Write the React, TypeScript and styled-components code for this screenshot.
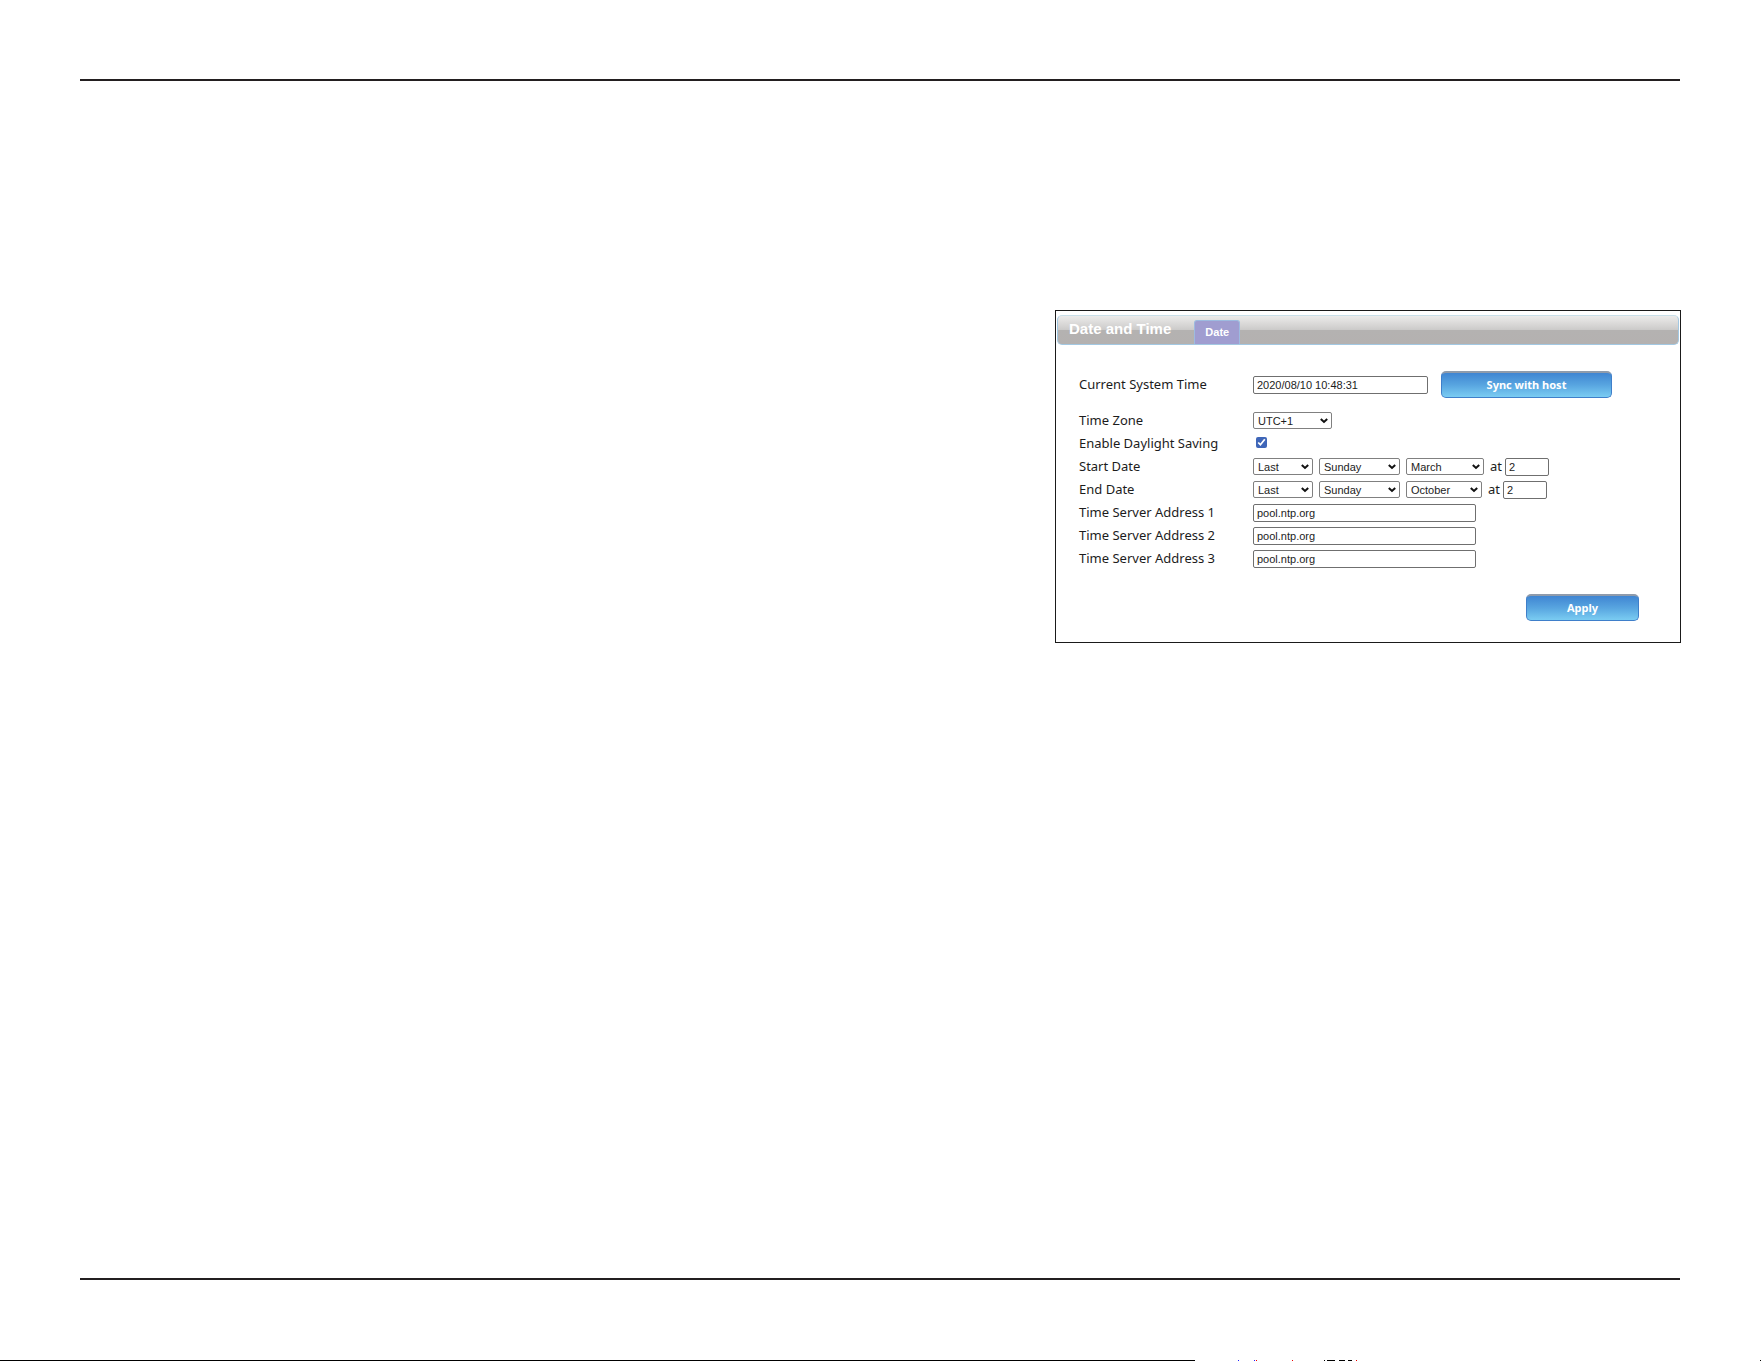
import React from "react";
import styled, { createGlobalStyle } from "styled-components";

const GlobalStyle = createGlobalStyle`
  *, *::before, *::after { box-sizing: border-box; }
  body { margin: 0; background: #fff; color: #1c1c1c; font-family: "Noto Sans", "Open Sans", sans-serif; }
`;

const Page = styled.div`
  min-height: 100vh;
  display: flex;
  flex-direction: column;
  padding-top: 79px;
`;

const Rule = styled.hr`
  flex: none;
  height: 2px;
  margin: 0 81px 0 80px;
  border: 0;
  background: #231f20;
`;

const Main = styled.main`
  flex: 1;
  display: flex;
  justify-content: flex-end;
  align-items: flex-start;
  padding: 229px 80px 40px;
`;

const PageFoot = styled.footer`
  display: flex;
  padding-top: 80px;
`;

const FootLine = styled.div`
  flex: 1;
  height: 1px;
  background: #000;
`;

const FootMarks = styled.svg`
  display: block;
  flex: none;
`;

const Panel = styled.section`
  width: 626px;
  max-width: 100%;
  border: 1px solid #1a1a1a;
  background: #fff;
`;

const TitleBar = styled.header`
  display: flex;
  align-items: flex-end;
  gap: 23px;
  height: 30px;
  margin: 4px 1px 0;
  padding-left: 11px;
  border: 1px solid #a3c8e2;
  border-top-color: #c9dfe9;
  border-radius: 5px;
  background: linear-gradient(#ecebea 0, #cbcac9 50%, #b4b2b1 51%, #b4b1b0 100%);
`;

const Title = styled.h1`
  margin: 0;
  padding-bottom: 6px;
  font: bold 15px/18px "Liberation Sans", Arial, sans-serif;
  color: #fff;
`;

const Tab = styled.a`
  width: 46px;
  height: 24px;
  border: 1px solid #9dbbe0;
  border-bottom: 0;
  border-radius: 3px 3px 0 0;
  background: #a09dd0;
  color: #fff;
  font: bold 11px/23px "Liberation Sans", Arial, sans-serif;
  text-align: center;
  text-decoration: none;
`;

const Form = styled.form`
  display: flex;
  flex-direction: column;
  padding: 26px 41px 21px 23px;
`;

const Row = styled.div<{ $gap?: number }>`
  display: grid;
  grid-template-columns: 174px 1fr;
  align-items: center;
  min-height: 23px;
  margin-bottom: ${(p) => p.$gap ?? 0}px;
`;

const labelFont = `
  padding-bottom: 2px;
  font-size: 13px;
  line-height: 18px;
  color: #1c1c1c;
`;

const Label = styled.label`
  ${labelFont}
`;

const AtLabel = styled.label`
  ${labelFont}
`;

const Controls = styled.div<{ $gap?: number }>`
  display: flex;
  align-items: center;
  gap: ${(p) => p.$gap ?? 6}px;
`;

const At = styled.span`
  display: flex;
  align-items: center;
  gap: 3px;
`;

const TextBox = styled.input<{ $w: number }>`
  width: ${(p) => p.$w}px;
  height: 18px;
  padding: 0 3px;
  border: 1px solid #6f6f6f;
  border-radius: 2px;
  background: #fff;
  color: #1c1c1c;
  font: 11px/16px "Liberation Sans", Arial, sans-serif;
`;

const SelectWrap = styled.span<{ $w: number }>`
  position: relative;
  display: flex;
  width: ${(p) => p.$w}px;
`;

const SelectBox = styled.select`
  appearance: none;
  width: 100%;
  height: 17px;
  padding: 1px 16px 0 4px;
  border: 1px solid #808080;
  border-radius: 2px;
  background: #fff;
  color: #1c1c1c;
  font: 11px/14px "Liberation Sans", Arial, sans-serif;
`;

const Chevron = styled.svg`
  position: absolute;
  right: 4px;
  top: 6px;
  pointer-events: none;
`;

const Tick = styled.input`
  width: 11px;
  height: 11px;
  margin: 0 3px 2px;
  accent-color: #3f66b8;
`;

const BlueButton = styled.button<{ $w: number }>`
  width: ${(p) => p.$w}px;
  height: 27px;
  padding: 0;
  border: 1px solid #3f7fca;
  border-top: 2px solid #8f9bab;
  border-radius: 5px;
  background: linear-gradient(#3f85d2, #58a5e0 50%, #7accf2);
  color: #fff;
  font: bold 11px/20px "Noto Sans", "Open Sans", sans-serif;
`;

const Actions = styled.div`
  display: flex;
  justify-content: flex-end;
  padding-top: 24px;
`;

function Select({ label, id, value, w }: { label?: string; id?: string; value: string; w: number }) {
  return (
    <SelectWrap $w={w}>
      <SelectBox id={id} aria-label={label} defaultValue={value}>
        <option>{value}</option>
      </SelectBox>
      <Chevron width="8" height="6" viewBox="0 0 8 6" aria-hidden="true">
        <path d="M.8 1 4 4 7.2 1" fill="none" stroke="#111" strokeWidth="2" />
      </Chevron>
    </SelectWrap>
  );
}

function DateRow({ name, month, monthWidth }: { name: string; month: string; monthWidth: number }) {
  const id = name.toLowerCase().replace(" ", "-");
  return (
    <Row>
      <Label htmlFor={id}>{name}</Label>
      <Controls>
        <Select id={id} value="Last" w={60} />
        <Select label={`${name} weekday`} value="Sunday" w={81} />
        <Select label={`${name} month`} value={month} w={monthWidth} />
        <At>
          <AtLabel htmlFor={`${id}-hour`}>at</AtLabel>
          <TextBox id={`${id}-hour`} $w={44} defaultValue="2" />
        </At>
      </Controls>
    </Row>
  );
}

export default function App() {
  return (
    <Page>
      <GlobalStyle />
      <Rule />
      <Main>
        <Panel>
          <TitleBar>
            <Title>Date and Time</Title>
            <Tab href="#date">Date</Tab>
          </TitleBar>
          <Form onSubmit={(e) => e.preventDefault()}>
            <Row $gap={11}>
              <Label htmlFor="now">Current System Time</Label>
              <Controls $gap={13}>
                <TextBox id="now" $w={175} defaultValue="2020/08/10 10:48:31" />
                <BlueButton type="button" $w={171}>Sync with host</BlueButton>
              </Controls>
            </Row>
            <Row>
              <Label htmlFor="zone">Time Zone</Label>
              <Select id="zone" value="UTC+1" w={79} />
            </Row>
            <Row>
              <Label htmlFor="dst">Enable Daylight Saving</Label>
              <Tick id="dst" type="checkbox" defaultChecked />
            </Row>
            <DateRow name="Start Date" month="March" monthWidth={78} />
            <DateRow name="End Date" month="October" monthWidth={76} />
            {[1, 2, 3].map((n) => (
              <Row key={n}>
                <Label htmlFor={`server-${n}`}>Time Server Address {n}</Label>
                <TextBox id={`server-${n}`} $w={223} defaultValue="pool.ntp.org" />
              </Row>
            ))}
            <Actions>
              <BlueButton type="submit" $w={113}>Apply</BlueButton>
            </Actions>
          </Form>
        </Panel>
      </Main>
      <Rule />
      <PageFoot>
        <FootLine />
        <FootMarks width="566" height="1" viewBox="0 0 566 1" aria-hidden="true">
          <path d="M129 0h1v1h-1zM132 0h8v1h-8zM144 0h6v1h-6zM153 0h4v1h-4zM565 0h1v1h-1z" fill="#000" />
          <path d="M43 0h1v1h-1zM59 0h1v1h-1z" fill="#22f" />
          <path d="M61 0h1v1h-1zM97 0h1v1h-1zM161 0h1v1h-1z" fill="#e00" />
        </FootMarks>
      </PageFoot>
    </Page>
  );
}
